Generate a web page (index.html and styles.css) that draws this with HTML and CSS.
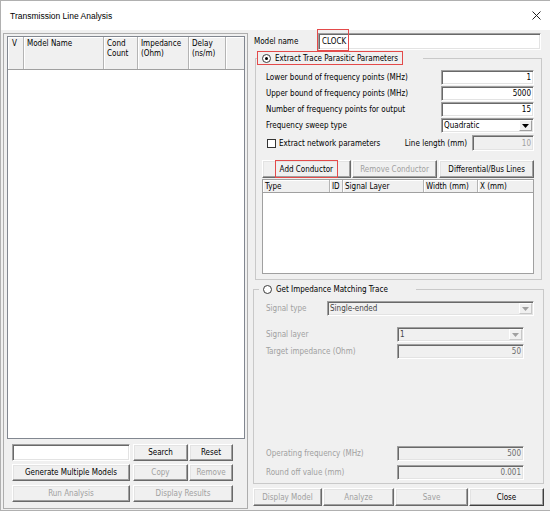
FILE: index.html
```html
<!DOCTYPE html>
<html>
<head>
<meta charset="utf-8">
<title>Transmission Line Analysis</title>
<link rel="stylesheet" href="styles.css">
</head>
<body>
<div class="window">
  <div class="titlebar">
    <span class="title">Transmission Line Analysis</span>
    <svg class="xbtn" width="9" height="9" viewBox="0 0 9 9"><path d="M0.5 0.5L8.5 8.5M8.5 0.5L0.5 8.5" stroke="#222" stroke-width="1" fill="none"/></svg>
  </div>
  <div class="client">
    <div class="left">
      <div class="list">
        <div class="lhead">
          <div class="hc c-v">V</div>
          <div class="hc c-name">Model Name</div>
          <div class="hc c-cond">Cond<br>Count</div>
          <div class="hc c-imp">Impedance<br>(Ohm)</div>
          <div class="hc c-delay">Delay<br>(ns/m)</div>
          <div class="hc c-fill"></div>
        </div>
      </div>
      <div class="ctrls">
        <div class="crow">
          <div class="tb w1"></div>
          <div class="btn w2">Search</div>
          <div class="btn w3">Reset</div>
        </div>
        <div class="crow">
          <div class="btn w1">Generate Multiple Models</div>
          <div class="btn w2 dis">Copy</div>
          <div class="btn w3 dis">Remove</div>
        </div>
        <div class="crow last">
          <div class="btn w1 dis">Run Analysis</div>
          <div class="btn w23 dis">Display Results</div>
        </div>
      </div>
    </div>

    <div class="right">
      <div class="mrow">
        <span class="mlabel">Model name</span>
        <div class="tb mname"><span class="mtext">CLOCK</span><span class="hl"></span></div>
      </div>

      <fieldset class="g1">
        <legend class="lg1"><span class="hlbox"><span class="radio on"></span><span>Extract Trace Parasitic Parameters</span></span></legend>
        <div class="frow"><span>Lower bound of frequency points (MHz)</span><div class="tb num">1</div></div>
        <div class="frow"><span>Upper bound of frequency points (MHz)</span><div class="tb num">5000</div></div>
        <div class="frow"><span>Number of frequency points for output</span><div class="tb num">15</div></div>
        <div class="frow selrow"><span>Frequency sweep type</span><div class="tb sel num-sel"><span class="stext">Quadratic</span><span class="arr"><svg width="7" height="4" viewBox="0 0 7 4"><path d="M0 0H7L3.5 4Z" fill="#000"/></svg></span></div></div>
        <div class="frow chkrow">
          <span class="chkwrap"><span class="chk"></span><span>Extract network parameters</span></span>
          <span class="llwrap"><span>Line length (mm)</span><div class="tb dtb ll">10</div></span>
        </div>
        <div class="btnrow">
          <div class="btn b-add"><span class="hlbtn">Add Conductor</span></div>
          <div class="btn b-rem dis">Remove Conductor</div>
          <div class="btn b-diff">Differential/Bus Lines</div>
        </div>
        <div class="tbl">
          <div class="thead">
            <div class="th t-type">Type</div>
            <div class="th t-id">ID</div>
            <div class="th t-sl">Signal Layer</div>
            <div class="th t-w">Width (mm)</div>
            <div class="th t-x">X (mm)</div>
          </div>
        </div>
      </fieldset>

      <fieldset class="g2">
        <legend class="lg2"><span class="radio"></span><span>Get Impedance Matching Trace</span></legend>
        <div class="grow r1"><span class="dlabel">Signal type</span><div class="tb sel dsel st"><span class="stext">Single-ended</span><span class="arr"><svg width="7" height="4" viewBox="0 0 7 4"><path d="M0 0H7L3.5 4Z" fill="#a0a0a0"/></svg></span></div></div>
        <div class="grow r2"><span class="dlabel">Signal layer</span><div class="tb sel dsel w127"><span class="stext">1</span><span class="arr"><svg width="7" height="4" viewBox="0 0 7 4"><path d="M0 0H7L3.5 4Z" fill="#a0a0a0"/></svg></span></div></div>
        <div class="grow r3"><span class="dlabel">Target impedance (Ohm)</span><div class="tb dtb w127">50</div></div>
        <div class="grow r4"><span class="dlabel">Operating frequency (MHz)</span><div class="tb dtb w127">500</div></div>
        <div class="grow r5"><span class="dlabel">Round off value (mm)</span><div class="tb dtb w127">0.001</div></div>
      </fieldset>

      <div class="bbar">
        <div class="btn dis bb1">Display Model</div>
        <div class="btn dis bb2">Analyze</div>
        <div class="btn dis bb3">Save</div>
        <div class="btn def bb4">Close</div>
      </div>
    </div>
  </div>
</div>
</body>
</html>
```

FILE: styles.css
```css
* { box-sizing: border-box; margin: 0; padding: 0; }
body {
  background: #fff;
  font-family: "DejaVu Sans Condensed", "DejaVu Sans", sans-serif;
  font-stretch: condensed;
  font-size: 8px;
  color: #000;
}
.window {
  width: 550px;
  height: 511px;
  border: 1px solid #b0b0b0;
  border-right: none;
  background: #f0f0f0;
}
.titlebar {
  height: 29px;
  background: #fff;
  display: flex;
  align-items: center;
  justify-content: space-between;
  padding: 0 9px 0 9px;
}
.title {
  font-family: "Liberation Sans", Arial, sans-serif;
  font-stretch: normal;
  font-size: 8.5px;
  color: #000;
}
.xbtn { display: block; }

.client {
  display: flex;
  gap: 5px;
  height: 480px;
  padding: 3px 0 0 2px;
  background: #f0f0f0;
}

/* left panel */
.left {
  flex: none;
  width: 245px;
  height: 476px;
  border: 1px solid #adadad;
  padding: 2px 0 0 3px;
}
.list {
  width: 238px;
  height: 403px;
  border: 1px solid #828790;
  background: #fff;
}
.lhead {
  display: flex;
  height: 33px;
  background: #f0f0f0;
  border-bottom: 1px solid #a0a0a0;
}
.hc {
  height: 100%;
  border-right: 1px solid #b4b4b4;
  box-shadow: inset 1px 1px 0 #fff;
  padding: 2px 0 0 3px;
  line-height: 10px;
  white-space: nowrap;
}
.c-v { width: 16px; padding-left: 4px; }
.c-name { width: 80px; }
.c-cond { width: 34px; }
.c-imp { width: 51px; }
.c-delay { width: 37px; }
.c-fill { flex: 1; border-right: none; }

.ctrls {
  margin: 5px 0 0 5px;
  display: flex;
  flex-direction: column;
  gap: 3px;
}
.crow { display: flex; height: 17px; }
.crow.last { margin-top: 1px; }
.w1 { width: 118px; margin-right: 3px; }
.w2 { width: 55px; margin-right: 1px; }
.w3 { width: 44px; }
.w23 { width: 100px; }

/* controls */
.tb {
  background: #fff;
  border: 1px solid;
  border-color: #a0a0a0 #fff #fff #a0a0a0;
  box-shadow: inset 1px 1px 0 #696969, inset -1px -1px 0 #e3e3e3;
  display: flex;
  align-items: center;
  justify-content: flex-end;
  padding: 0 2px;
  white-space: nowrap;
}
.dtb { background: #f0f0f0; color: #6d6d6d; }
.btn {
  display: flex;
  align-items: center;
  justify-content: center;
  background: #f0f0f0;
  border: 1px solid;
  border-color: #fff #696969 #696969 #fff;
  box-shadow: inset -1px -1px 0 #a0a0a0, inset 1px 1px 0 #e3e3e3;
  white-space: nowrap;
  color: #000;
}
.btn.dis { color: #a0a0a0; }
.btn.def { border-color: #fff #404040 #404040 #fff; }

.sel { justify-content: space-between; padding: 0 1px 0 2px; }
.stext { flex: 1; }
.arr {
  width: 13px;
  height: 11px;
  display: flex;
  align-items: center;
  justify-content: center;
  background: #f0f0f0;
  border: 1px solid;
  border-color: #fff #a0a0a0 #a0a0a0 #fff;
}
.arr svg { display: block; }
.dsel { background: #f0f0f0; color: #444; }
.dsel .arr { border-color: #fff #c8c8c8 #c8c8c8 #fff; }

/* right panel */
.right {
  flex: none;
  width: 291px;
  display: flex;
  flex-direction: column;
}
.mrow {
  display: flex;
  align-items: center;
  height: 17px;
  padding-left: 1px;
}
.mlabel { width: 64px; }
.mname {
  width: 223px;
  height: 17px;
  justify-content: flex-start;
  padding-left: 3px;
  position: relative;
}
.hl {
  position: absolute;
  left: -2px;
  top: -5px;
  width: 32px;
  height: 22px;
  border: 1px solid #e34a4a;
}

fieldset { border: 1px solid #c9c9c9; min-width: 0; }
.g1 {
  margin: 1px 0 0 2px;
  width: 287px;
  padding: 5px 7px 5px 10px;
}
.lg1 { margin-left: -9px; padding: 0 20px 0 0; }
.hlbox {
  display: flex;
  align-items: center;
  height: 14px;
  border: 1px solid #e34a4a;
  padding: 0 4px 0 4px;
  gap: 4px;
}
.radio {
  width: 9px;
  height: 9px;
  border-radius: 50%;
  border: 1px solid #3c3c3c;
  background: #fff;
  display: flex;
  align-items: center;
  justify-content: center;
  flex: none;
}
.radio.on::after {
  content: "";
  width: 3px;
  height: 3px;
  border-radius: 50%;
  background: #000;
}
.frow {
  display: flex;
  align-items: center;
  justify-content: space-between;
  height: 15px;
  margin-bottom: 1px;
  white-space: nowrap;
}
.frow .tb { width: 93px; height: 15px; }
.selrow { margin-top: 1px; }
.chkrow { margin-top: 2px; height: 16px; }
.chkwrap { display: flex; align-items: center; gap: 3px; margin-left: 1px; }
.chk {
  width: 9px;
  height: 9px;
  border: 1px solid #333;
  background: #fff;
}
.llwrap { display: flex; align-items: center; gap: 5px; }
.frow .tb.ll { width: 62px; height: 16px; color: #a0a0a0; }

.btnrow {
  display: flex;
  height: 18px;
  margin: 9px 0 0 -4px;
}
.b-add { width: 89px; margin-right: 1px; }
.b-rem { width: 86px; margin-right: 2px; }
.b-diff { width: 95px; }
.hlbtn {
  height: 18px;
  margin: -1px 0;
  display: flex;
  align-items: center;
  border: 1px solid #e34a4a;
  padding: 0 4px;
}

.tbl {
  margin: 1px 0 0 -4px;
  width: 272px;
  height: 95px;
  border: 1px solid #a0a0a0;
  background: #fff;
}
.thead {
  display: flex;
  height: 13px;
  background: #f0f0f0;
  border-bottom: 1px solid #a0a0a0;
}
.th {
  height: 100%;
  border-right: 1px solid #b4b4b4;
  box-shadow: inset 1px 1px 0 #fff;
  padding-left: 2px;
  display: flex;
  align-items: center;
  white-space: nowrap;
}
.t-type { width: 67px; }
.t-id { width: 13px; }
.t-sl { width: 81px; }
.t-w { width: 54px; }
.t-x { width: 55px; border-right: none; }

.g2 {
  margin-top: 2px;
  width: 291px;
  padding: 5px 9px 3px 12px;
}
.lg2 {
  margin-left: -7px;
  padding: 0 28px 0 4px;
  display: flex;
  align-items: center;
  gap: 4px;
  height: 14px;
}
.grow {
  display: flex;
  align-items: center;
  justify-content: space-between;
  height: 15px;
  white-space: nowrap;
}
.dlabel { color: #a0a0a0; }
.grow .tb { height: 15px; }
.st { width: 207px; }
.w127 { width: 127px; margin-right: 10px; }
.r2 { margin-top: 11px; }
.r3 { margin-top: 2px; }
.r4 { margin-top: 87px; }
.r5 { margin-top: 4px; }

.bbar {
  display: flex;
  gap: 1px;
  height: 18px;
  margin-top: 4px;
}
.bb1 { width: 69px; }
.bb2 { width: 71px; }
.bb3 { width: 73px; }
.bb4 { width: 75px; }
```
